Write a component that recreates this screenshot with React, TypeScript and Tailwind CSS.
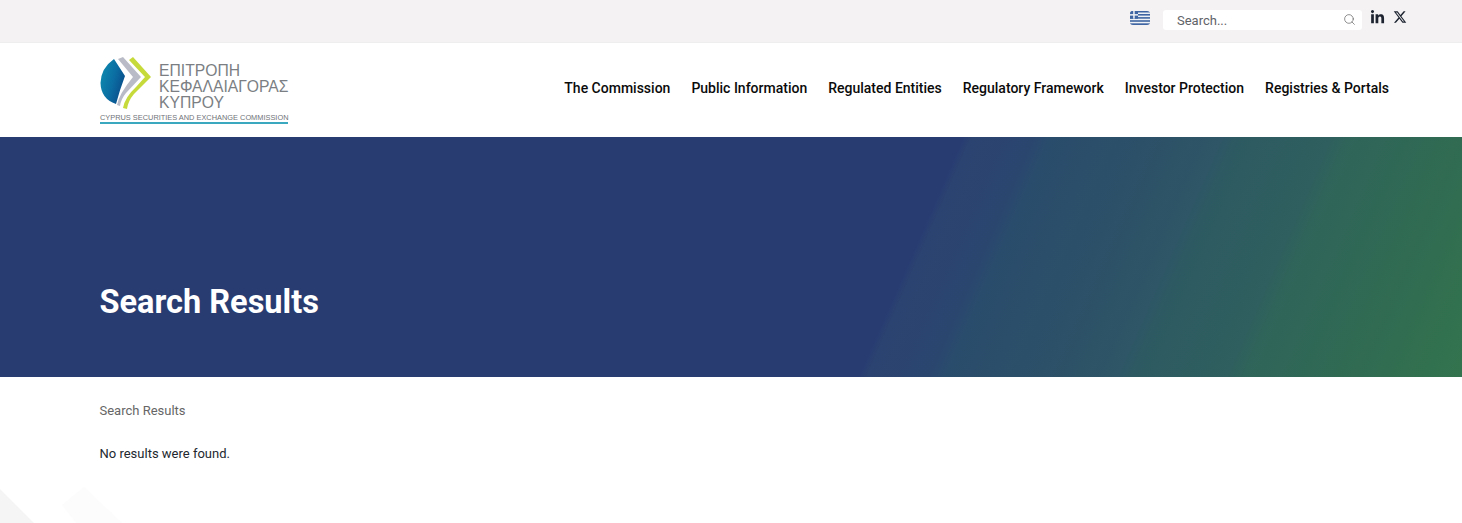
import { Search } from "lucide-react";
import { FaLinkedinIn } from "react-icons/fa";
import { FaXTwitter } from "react-icons/fa6";

const navItems = [
  "The Commission",
  "Public Information",
  "Regulated Entities",
  "Regulatory Framework",
  "Investor Protection",
  "Registries & Portals",
];

function GreekFlag() {
  return (
    <svg width="20" height="14" viewBox="0 0 20 14" className="rounded-[3px]">
      <rect width="20" height="14" fill="#3f66a3" />
      <rect y="1.5" width="20" height="1.5" fill="#eef1f6" />
      <rect y="4.6" width="20" height="1.5" fill="#eef1f6" />
      <rect y="7.7" width="20" height="1.5" fill="#eef1f6" />
      <rect y="10.8" width="20" height="1.5" fill="#eef1f6" />
      <rect width="8" height="7.7" fill="#3f66a3" />
      <rect x="3.2" width="1.5" height="7.7" fill="#eef1f6" />
      <rect y="3.1" width="8" height="1.5" fill="#eef1f6" />
    </svg>
  );
}

function LogoMark() {
  return (
    <svg width="52" height="54" viewBox="0 0 52 54" className="shrink-0">
      <defs>
        <linearGradient id="logoBlue" x1="0" y1="0" x2="1" y2="0.5">
          <stop offset="0" stopColor="#0f8fb0" />
          <stop offset="0.6" stopColor="#0b6ea3" />
          <stop offset="1" stopColor="#0a4f8c" />
        </linearGradient>
      </defs>
      <path d="M14 3 L25 20 Q20 33 16 48 Q1 43 0.5 27 Q1 12 14 3 Z" fill="url(#logoBlue)" />
      <path d="M18 3 L23 1 L41 21 L26 37 Q21 43 20 50 L17 49 Q19 38 33 21 Z" fill="#b9bcc6" />
      <path d="M29 4 L33 1 L51 21 L34 38 Q28 45 27 53 L23 52 Q25 41 36 31 L45 21 Z" fill="#c6da3a" />
    </svg>
  );
}

function Logo() {
  return (
    <div className="w-[188px] flex flex-col">
      <div className="flex items-start h-[56px]">
        <LogoMark />
        <div className="ml-[7px] mt-[7px] text-[15.7px] leading-[16px] text-[#7b7f84] font-['Liberation_Sans',sans-serif] whitespace-nowrap">
          <div>ΕΠΙΤΡΟΠΗ</div>
          <div>ΚΕΦΑΛΑΙΑΓΟΡΑΣ</div>
          <div>ΚΥΠΡΟΥ</div>
        </div>
      </div>
      <div className="mt-[2px] text-[7.4px] leading-[8px] text-[#6f7378] font-['Liberation_Sans',sans-serif] whitespace-nowrap border-b-2 border-[#3aa9c0]">
        CYPRUS SECURITIES AND EXCHANGE COMMISSION
      </div>
    </div>
  );
}

export default function App() {
  return (
    <div className="relative min-h-[523px] overflow-hidden bg-white font-['Roboto',sans-serif]">
      <div className="h-[43px] bg-[#f4f2f3] border-b border-[#efeeee] flex items-start justify-end pr-[55px]">
        <div className="mt-[11px]"><GreekFlag /></div>
        <div className="ml-[13px] mt-[10px] w-[199px] h-[20px] bg-white rounded-[3px] flex items-center pl-[14px] pr-[6px]">
          <span className="flex-1 text-[13px] leading-[21px] text-[#5f6368]">Search...</span>
          <Search size={13} strokeWidth={1.2} className="text-[#555] mt-[-2px]" />
        </div>
        <div className="ml-[8px] mt-[10px] text-[#1d2430]"><FaLinkedinIn size={15} /></div>
        <div className="ml-[8px] mt-[10px] text-[#1d2430]"><FaXTwitter size={14} /></div>
      </div>

      <header className="h-[94px] bg-white flex items-center justify-between pl-[100px] pr-[73px]">
        <Logo />
        <nav className="flex items-center gap-[21px] mt-[-4px]">
          {navItems.map((item) => (
            <a key={item} className="text-[14px] font-medium text-[#0b0b0b] whitespace-nowrap">{item}</a>
          ))}
        </nav>
      </header>

      <section className="h-[240px] bg-[linear-gradient(113.6deg,#283c72_61.5%,#2b4370_62%,#2a466f_66%,#2a4c6c_67%,#2c5068_73%,#2e5666_78%,#2d5a62_79%,#2f5f5e_85%,#2f645a_86%,#306b52_93%,#33744e_100%)]">
        <h1 className="pl-[99.5px] pt-[145px] text-[32.5px] leading-[40px] font-bold text-white">Search Results</h1>
      </section>

      <main className="pl-[99.5px] pt-[26px]">
        <p className="text-[13px] leading-[16px] text-[#666]">Search Results</p>
        <p className="mt-[27px] text-[13px] leading-[16px] text-[#23282f]">No results were found.</p>
      </main>

      <svg className="absolute left-0 bottom-0" width="130" height="36" viewBox="0 0 130 36">
        <path d="M0 2 L34 36 L0 36 Z" fill="#f5f5f5" />
        <path d="M62 18 L84 0 L122 36 L76 36 Z" fill="#fcfcfc" />
      </svg>
    </div>
  );
}
